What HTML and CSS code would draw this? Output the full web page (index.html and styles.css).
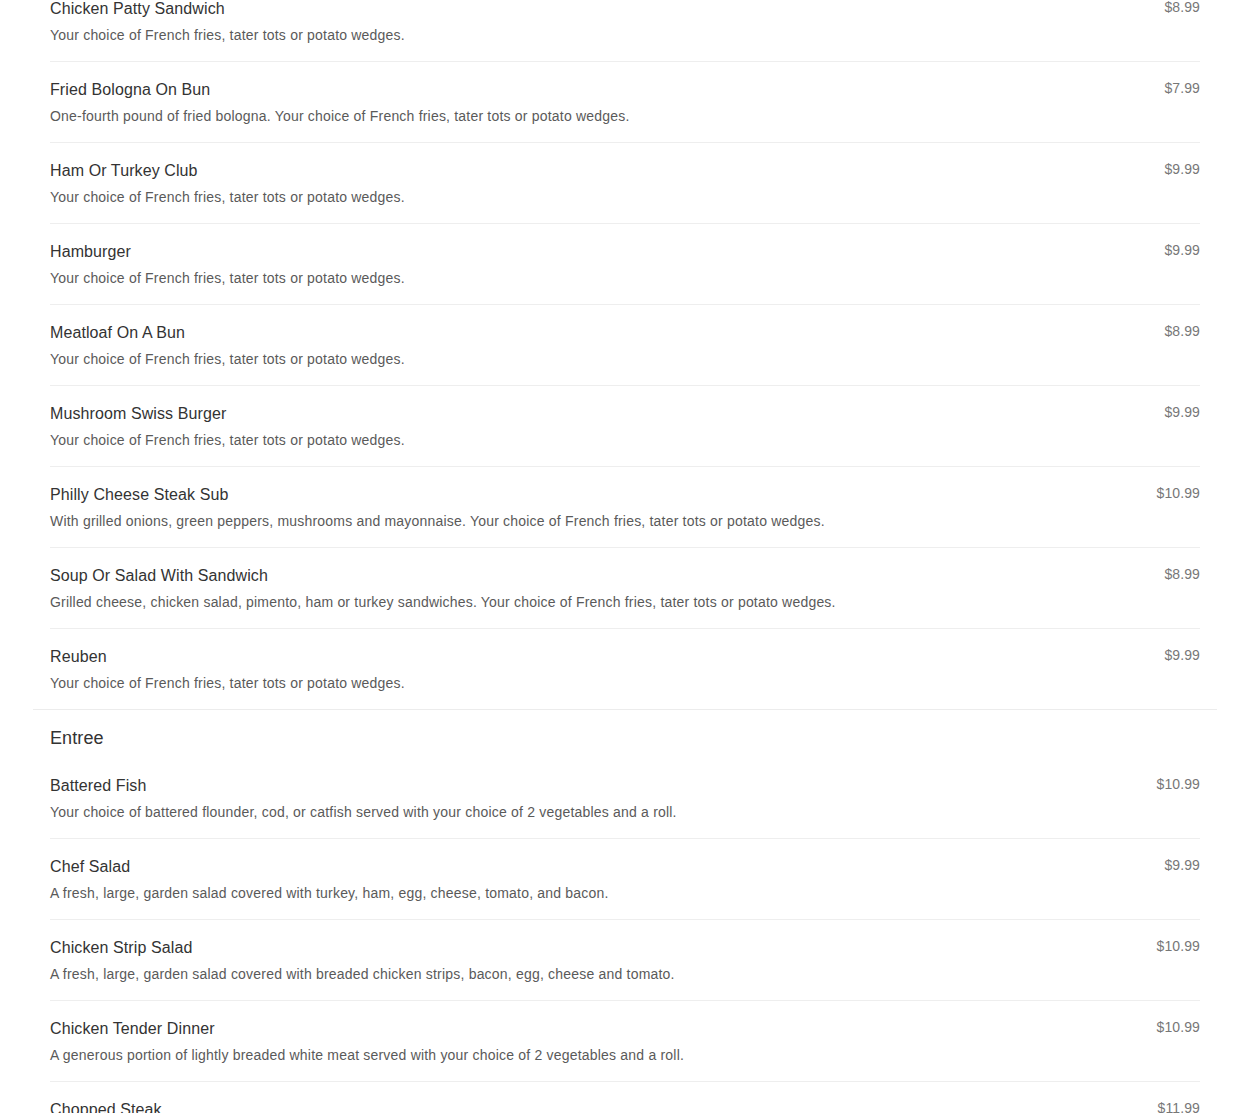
FILE: index.html
```html
<!DOCTYPE html>
<html lang="en">
<head>
    <meta charset="UTF-8">
    <meta name="viewport" content="width=device-width, initial-scale=1.0">
    <title>Menu</title>
    <link rel="stylesheet" href="styles.css">
</head>
<body>
    <div class="menu">
        <div class="section">
            <div class="item">
                <div class="info">
                    <h3>Chicken Patty Sandwich</h3>
                    <p>Your choice of French fries, tater tots or potato wedges.</p>
                </div>
                <span class="price">$8.99</span>
            </div>
            <div class="item">
                <div class="info">
                    <h3>Fried Bologna On Bun</h3>
                    <p>One-fourth pound of fried bologna. Your choice of French fries, tater tots or potato wedges.</p>
                </div>
                <span class="price">$7.99</span>
            </div>
            <div class="item">
                <div class="info">
                    <h3>Ham Or Turkey Club</h3>
                    <p>Your choice of French fries, tater tots or potato wedges.</p>
                </div>
                <span class="price">$9.99</span>
            </div>
            <div class="item">
                <div class="info">
                    <h3>Hamburger</h3>
                    <p>Your choice of French fries, tater tots or potato wedges.</p>
                </div>
                <span class="price">$9.99</span>
            </div>
            <div class="item">
                <div class="info">
                    <h3>Meatloaf On A Bun</h3>
                    <p>Your choice of French fries, tater tots or potato wedges.</p>
                </div>
                <span class="price">$8.99</span>
            </div>
            <div class="item">
                <div class="info">
                    <h3>Mushroom Swiss Burger</h3>
                    <p>Your choice of French fries, tater tots or potato wedges.</p>
                </div>
                <span class="price">$9.99</span>
            </div>
            <div class="item">
                <div class="info">
                    <h3>Philly Cheese Steak Sub</h3>
                    <p>With grilled onions, green peppers, mushrooms and mayonnaise. Your choice of French fries, tater tots or potato wedges.</p>
                </div>
                <span class="price">$10.99</span>
            </div>
            <div class="item">
                <div class="info">
                    <h3>Soup Or Salad With Sandwich</h3>
                    <p>Grilled cheese, chicken salad, pimento, ham or turkey sandwiches. Your choice of French fries, tater tots or potato wedges.</p>
                </div>
                <span class="price">$8.99</span>
            </div>
            <div class="item">
                <div class="info">
                    <h3>Reuben</h3>
                    <p>Your choice of French fries, tater tots or potato wedges.</p>
                </div>
                <span class="price">$9.99</span>
            </div>
        </div>

        <div class="section">
            <h2>Entree</h2>
            <div class="item">
                <div class="info">
                    <h3>Battered Fish</h3>
                    <p>Your choice of battered flounder, cod, or catfish served with your choice of 2 vegetables and a roll.</p>
                </div>
                <span class="price">$10.99</span>
            </div>
            <div class="item">
                <div class="info">
                    <h3>Chef Salad</h3>
                    <p>A fresh, large, garden salad covered with turkey, ham, egg, cheese, tomato, and bacon.</p>
                </div>
                <span class="price">$9.99</span>
            </div>
            <div class="item">
                <div class="info">
                    <h3>Chicken Strip Salad</h3>
                    <p>A fresh, large, garden salad covered with breaded chicken strips, bacon, egg, cheese and tomato.</p>
                </div>
                <span class="price">$10.99</span>
            </div>
            <div class="item">
                <div class="info">
                    <h3>Chicken Tender Dinner</h3>
                    <p>A generous portion of lightly breaded white meat served with your choice of 2 vegetables and a roll.</p>
                </div>
                <span class="price">$10.99</span>
            </div>
            <div class="item">
                <div class="info">
                    <h3>Chopped Steak</h3>
                    <p>Served with your choice of 2 vegetables and a roll.</p>
                </div>
                <span class="price">$11.99</span>
            </div>
        </div>
    </div>
</body>
</html>
```

FILE: styles.css
```css
body {
    font-family: 'Liberation Sans', Arial, sans-serif;
    background-color: #fff;
    margin: 0;
    padding: 0;
}
.menu {
    width: 1184px;
    margin: -19px auto 0;
}
.section {
    padding: 0 17px;
    border-bottom: 1px solid #ececec;
}
.section h2 {
    font-size: 18px;
    font-weight: normal;
    color: #333;
    line-height: 22px;
    letter-spacing: 0.1px;
    margin: 0;
    padding: 17px 0 9px;
}
.item {
    display: flex;
    justify-content: space-between;
    align-items: flex-start;
    padding: 18px 0 16px;
    border-bottom: 1px solid #eee;
}
.item:last-child {
    border-bottom: none;
}
.info h3 {
    font-size: 16px;
    font-weight: normal;
    color: #333;
    line-height: 20px;
    letter-spacing: 0.1px;
    margin: 0 0 6px;
}
.info p {
    font-size: 14px;
    color: #5a5a5a;
    line-height: 20px;
    letter-spacing: 0.2px;
    margin: 0;
}
.price {
    font-size: 14px;
    color: #777;
    line-height: 20px;
    letter-spacing: 0.1px;
    margin-top: -2px;
}
```
